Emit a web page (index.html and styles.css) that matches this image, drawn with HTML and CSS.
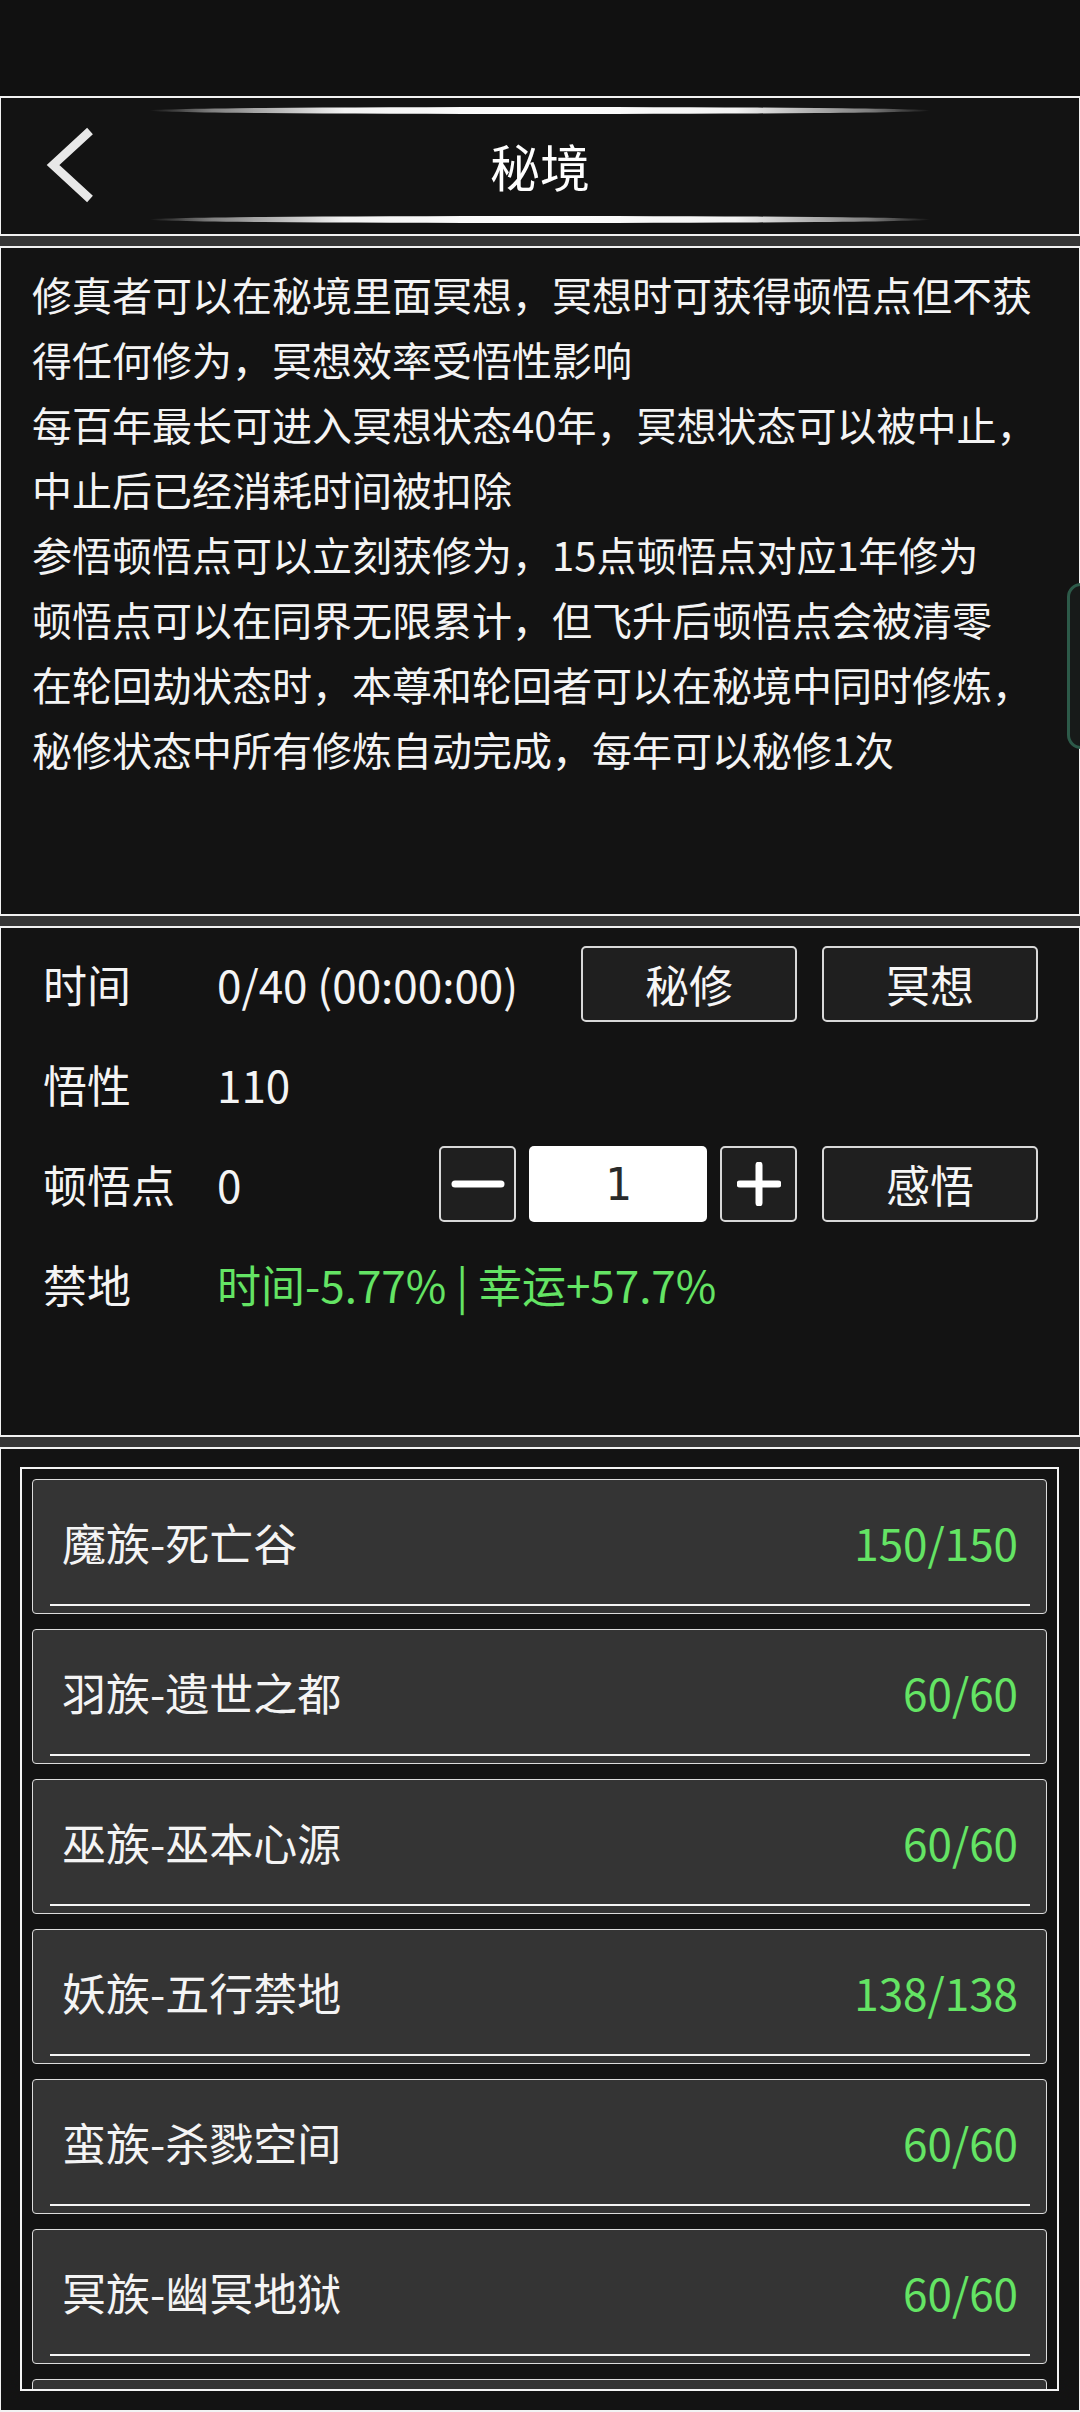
FILE: index.html
```html
<!DOCTYPE html>
<html lang="zh-CN">
<head>
    <meta charset="UTF-8">
    <meta name="viewport" content="width=device-width, initial-scale=1.0">
    <title>秘境</title>
    <link rel="stylesheet" href="styles.css">
</head>
<body>

    <div class="status-bar"></div>

    <div class="screen">
        <!-- title bar -->
        <div class="panel header">
            <div class="glow"></div>
            <div class="title-bar">
                <svg class="back" width="60" height="90" viewBox="0 0 60 90">
                    <polyline points="50,11 13,45 50,79" fill="none" stroke="#e8e8e8" stroke-width="8.5" stroke-linejoin="miter"/>
                </svg>
                <h1>秘境</h1>
                <span></span>
            </div>
            <div class="glow"></div>
        </div>

        <!-- rules -->
        <div class="panel intro">
            <p>修真者可以在秘境里面冥想，冥想时可获得顿悟点但不获得任何修为，冥想效率受悟性影响</p>
            <p>每百年最长可进入冥想状态40年，冥想状态可以被中止，中止后已经消耗时间被扣除</p>
            <p>参悟顿悟点可以立刻获修为，15点顿悟点对应1年修为</p>
            <p>顿悟点可以在同界无限累计，但飞升后顿悟点会被清零</p>
            <p>在轮回劫状态时，本尊和轮回者可以在秘境中同时修炼，秘修状态中所有修炼自动完成，每年可以秘修1次</p>
        </div>

        <!-- meditation stats -->
        <div class="panel stats">
            <div class="row">
                <span class="label">时间</span>
                <span class="value">0/40 (00:00:00)</span>
                <button class="btn">秘修</button>
                <button class="btn">冥想</button>
            </div>
            <div class="row">
                <span class="label">悟性</span>
                <span class="value">110</span>
            </div>
            <div class="row">
                <span class="label">顿悟点</span>
                <span class="value">0</span>
                <div class="stepper">
                    <button class="btn step">
                        <svg width="56" height="10" viewBox="0 0 56 10"><line x1="5" y1="5" x2="51" y2="5" stroke="#fff" stroke-width="7" stroke-linecap="round"/></svg>
                    </button>
                    <input class="amount" type="text" value="1">
                    <button class="btn step">
                        <svg width="44" height="44" viewBox="0 0 44 44"><path d="M22 3 V41 M3 22 H41" stroke="#fff" stroke-width="7" stroke-linecap="round"/></svg>
                    </button>
                </div>
                <button class="btn">感悟</button>
            </div>
            <div class="row">
                <span class="label">禁地</span>
                <span class="value green">时间-5.77% | 幸运+57.7%</span>
            </div>
        </div>

        <!-- forbidden lands -->
        <div class="panel realms">
            <div class="realm-frame">
                <div class="realm">
                    <div class="realm-row"><span>魔族-死亡谷</span><span class="count">150/150</span></div>
                    <div class="realm-line"></div>
                </div>
                <div class="realm">
                    <div class="realm-row"><span>羽族-遗世之都</span><span class="count">60/60</span></div>
                    <div class="realm-line"></div>
                </div>
                <div class="realm">
                    <div class="realm-row"><span>巫族-巫本心源</span><span class="count">60/60</span></div>
                    <div class="realm-line"></div>
                </div>
                <div class="realm">
                    <div class="realm-row"><span>妖族-五行禁地</span><span class="count">138/138</span></div>
                    <div class="realm-line"></div>
                </div>
                <div class="realm">
                    <div class="realm-row"><span>蛮族-杀戮空间</span><span class="count">60/60</span></div>
                    <div class="realm-line"></div>
                </div>
                <div class="realm">
                    <div class="realm-row"><span>冥族-幽冥地狱</span><span class="count">60/60</span></div>
                    <div class="realm-line"></div>
                </div>
                <div class="realm">
                    <div class="realm-row"></div>
                    <div class="realm-line"></div>
                </div>
            </div>
        </div>
    </div>

    <div class="side-handle"></div>

</body>
</html>
```

FILE: styles.css
```css
body {
    margin: 0;
    height: 2412px;
    overflow: hidden;
    background-color: #111;
    color: #f4f4f4;
    font-family: "Noto Sans CJK SC", "Noto Sans", sans-serif;
}
.status-bar {
    height: 96px;
    background-color: #111;
}
.screen {
    display: flex;
    flex-direction: column;
    gap: 10px;
    background-color: #363636;
}
.panel {
    box-sizing: border-box;
    background-color: #131313;
    border: 2px solid #f2f2f2;
    border-left-width: 1px;
    border-right-width: 1px;
}

/* header */
.header {
    height: 140px;
    display: flex;
    flex-direction: column;
    align-items: center;
    padding-top: 9px;
}
.glow {
    width: 782px;
    height: 7px;
    border-radius: 50%;
    background: linear-gradient(90deg, rgba(255,255,255,0) 0%, rgba(200,200,200,0.6) 8%, #f2f2f2 25%, #fff 50%, #f2f2f2 75%, rgba(200,200,200,0.6) 92%, rgba(255,255,255,0) 100%);
}
.title-bar {
    align-self: stretch;
    height: 102px;
    display: grid;
    grid-template-columns: 1fr auto 1fr;
    align-items: center;
}
.back {
    margin-left: 39px;
}
h1 {
    margin: 0;
    font-size: 50px;
    font-weight: normal;
    color: #fff;
}

/* rules text */
.intro {
    height: 670px;
    padding: 14px 31px;
}
.intro p {
    margin: 0;
    font-size: 40px;
    line-height: 65px;
}

/* stats */
.stats {
    height: 511px;
    padding: 18px 41px 0 42px;
    display: flex;
    flex-direction: column;
    gap: 24px;
}
.row {
    height: 76px;
    display: flex;
    align-items: center;
    gap: 25px;
    font-size: 44px;
}
.label {
    width: 149px;
}
.value {
    flex: 1;
}
.green {
    color: #64e464;
}
.btn {
    box-sizing: border-box;
    width: 216px;
    height: 76px;
    padding: 0;
    background-color: #1f1f1f;
    border: 2px solid #d8d8d8;
    border-radius: 5px;
    color: #f6f6f6;
    font-family: inherit;
    font-size: 44px;
    display: flex;
    align-items: center;
    justify-content: center;
}
.stepper {
    display: flex;
    gap: 13px;
}
.step {
    width: 77px;
}
.amount {
    box-sizing: border-box;
    width: 178px;
    height: 76px;
    border: none;
    border-radius: 5px;
    background-color: #fff;
    color: #2a2a2a;
    text-align: center;
    font-family: "DejaVu Sans Mono", monospace;
    font-size: 44px;
}

/* realm list */
.realms {
    height: 965px;
    padding: 18px 20px 0 19px;
}
.realm-frame {
    box-sizing: border-box;
    height: 924px;
    border: 2px solid #f4f4f4;
    padding: 10px;
    display: flex;
    flex-direction: column;
    gap: 15px;
    overflow: hidden;
}
.realm {
    box-sizing: border-box;
    flex: none;
    height: 135px;
    background-color: #343434;
    border: 1px solid #dcdcdc;
    border-radius: 4px;
    display: flex;
    flex-direction: column;
    padding: 0 16px 7px 17px;
}
.realm-row {
    flex: 1;
    display: flex;
    align-items: center;
    justify-content: space-between;
    padding: 0 12px 0 12px;
    font-size: 44px;
}
.count {
    color: #64e464;
}
.realm-line {
    height: 2px;
    background-color: #f4f4f4;
}

/* floating handle at the screen edge */
.side-handle {
    position: absolute;
    left: 1067px;
    top: 583px;
    width: 40px;
    height: 160px;
    border: 3px solid #2d5a49;
    border-radius: 14px;
    background-color: #171a19;
}
```
